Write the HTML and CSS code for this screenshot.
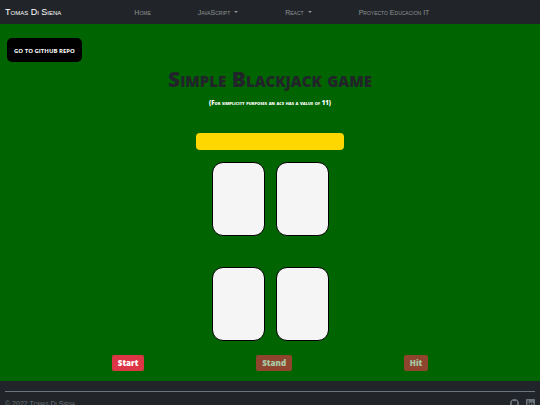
FILE: index.html
```html
<!DOCTYPE html>
<html lang="en">
<head>
    <meta charset="UTF-8">
    <meta name="viewport" content="width=device-width, initial-scale=1.0">
    <title>Simple Blackjack game</title>
    <link rel="stylesheet" href="styles.css">
</head>
<body>

    <!-- Navbar -->
    <header class="navbar">
        <a class="brand" href="#">Tomas Di Siena</a>
        <nav class="nav-links">
            <a href="#">Home</a>
            <a class="dropdown" href="#">JavaScript</a>
            <a class="dropdown" href="#">React</a>
            <a href="#">Proyecto Educacion IT</a>
        </nav>
    </header>

    <!-- Game -->
    <main class="game">
        <a class="repo-link" href="#">GO TO GITHUB REPO</a>
        <h1>Simple Blackjack game</h1>
        <p class="note">(For simplicity purposes an ace has a value of 11)</p>
        <div class="message"></div>
        <div class="table">
            <div class="hand">
                <div class="card"></div>
                <div class="card"></div>
            </div>
            <div class="hand">
                <div class="card"></div>
                <div class="card"></div>
            </div>
        </div>
        <div class="buttons">
            <button type="button" class="btn">Start</button>
            <button type="button" class="btn" disabled>Stand</button>
            <button type="button" class="btn" disabled>Hit</button>
        </div>
    </main>

    <footer class="footer">
        <div class="footer-row">
            <span>© 2022 Tomas Di Siena</span>
            <div class="social">
                <a href="#" aria-label="GitHub">
                    <svg viewBox="0 0 16 16"><path d="M8 0C3.58 0 0 3.58 0 8c0 3.54 2.29 6.53 5.47 7.59.4.07.55-.17.55-.38 0-.19-.01-.82-.01-1.49-2.01.37-2.53-.49-2.69-.94-.09-.23-.48-.94-.82-1.13-.28-.15-.68-.52-.01-.53.63-.01 1.08.58 1.23.82.72 1.21 1.87.87 2.33.66.07-.52.28-.87.51-1.07-1.78-.2-3.64-.89-3.64-3.95 0-.87.31-1.59.82-2.15-.08-.2-.36-1.02.08-2.12 0 0 .67-.21 2.2.82a7.6 7.6 0 0 1 4 0c1.53-1.04 2.2-.82 2.2-.82.44 1.1.16 1.92.08 2.12.51.56.82 1.27.82 2.15 0 3.07-1.87 3.75-3.65 3.95.29.25.54.73.54 1.48 0 1.07-.01 1.93-.01 2.2 0 .21.15.46.55.38A8.01 8.01 0 0 0 16 8c0-4.42-3.58-8-8-8z"/></svg>
                </a>
                <a href="#" aria-label="LinkedIn">
                    <svg viewBox="0 0 16 16"><path d="M0 1.15C0 .51.53 0 1.18 0h13.64C15.47 0 16 .51 16 1.15v13.7c0 .64-.53 1.15-1.18 1.15H1.18C.53 16 0 15.49 0 14.85V1.15zm4.94 12.24V6.17h-2.4v7.22h2.4zM3.74 5.18c.84 0 1.36-.55 1.36-1.25-.02-.71-.52-1.25-1.34-1.25s-1.36.54-1.36 1.25c0 .7.52 1.25 1.33 1.25zm4.91 8.21V9.36c0-.22.02-.43.08-.59.17-.43.57-.88 1.23-.88.87 0 1.21.66 1.21 1.63v3.87h2.4V9.25c0-2.22-1.18-3.25-2.76-3.25-1.27 0-1.84.7-2.16 1.19V6.17h-2.4c.03.68 0 7.22 0 7.22h2.4z"/></svg>
                </a>
            </div>
        </div>
    </footer>

</body>
</html>
```

FILE: styles.css
```css
* {
    box-sizing: border-box;
}
body {
    font-family: "Liberation Sans", Arial, sans-serif;
    margin: 0;
    background-color: #212529;
}
a {
    color: inherit;
    text-decoration: none;
}
.navbar {
    display: flex;
    align-items: center;
    gap: 73px;
    height: 24px;
    padding: 0 5px;
    background-color: #212529;
    font-variant: small-caps;
    white-space: nowrap;
}
.brand {
    color: #fff;
    font-size: 9px;
}
.nav-links {
    display: flex;
    align-items: center;
    gap: 47px;
    color: #909294;
    font-size: 7px;
}
.dropdown {
    display: flex;
    align-items: center;
    gap: 4px;
}
.dropdown::after {
    content: "";
    border-top: 2px solid;
    border-left: 2px solid transparent;
    border-right: 2px solid transparent;
}
.game {
    display: flex;
    flex-direction: column;
    align-items: center;
    padding: 14px 0 10px;
    background-color: #006400;
    font-family: "Open Sans", sans-serif;
}
.repo-link {
    align-self: flex-start;
    margin-left: 7px;
    padding: 8px 7px 6px;
    border-radius: 5px;
    background-color: #000;
    color: #fff;
    font-size: 6px;
    font-weight: 700;
    line-height: 10px;
}
h1 {
    margin: 5px 0 8px;
    color: #212529;
    font-size: 21px;
    font-weight: 800;
    font-variant: small-caps;
    line-height: 24px;
}
.note {
    margin: 0 0 26px;
    color: #fff;
    font-size: 6px;
    font-weight: 800;
    font-variant: small-caps;
    line-height: 8px;
}
.message {
    width: 148px;
    height: 17px;
    margin-bottom: 12px;
    border-radius: 4px;
    background-color: #ffd700;
}
.table {
    display: flex;
    flex-direction: column;
    gap: 31px;
    margin-bottom: 14px;
}
.hand {
    display: flex;
    gap: 11px;
}
.card {
    width: 53px;
    height: 74px;
    border: 1px solid #000;
    border-radius: 11px;
    background-color: #f5f5f5;
}
.buttons {
    display: flex;
    justify-content: space-evenly;
    align-self: stretch;
}
.btn {
    padding: 3px 6px;
    border: none;
    border-radius: 2px;
    background-color: #dc3545;
    color: #fff;
    font-family: inherit;
    font-size: 8px;
    font-weight: 800;
    line-height: 10px;
    cursor: pointer;
}
.btn:disabled {
    opacity: 0.65;
}
.footer {
    padding: 10px 5px;
    color: #6c757d;
    font-size: 7px;
    font-variant: small-caps;
}
.footer-row {
    display: flex;
    justify-content: space-between;
    padding-top: 7px;
    border-top: 1px solid #6c757d;
    line-height: 10px;
}
.social {
    display: flex;
    gap: 7px;
}
.social svg {
    display: block;
    width: 9px;
    height: 9px;
    fill: currentColor;
}
```
